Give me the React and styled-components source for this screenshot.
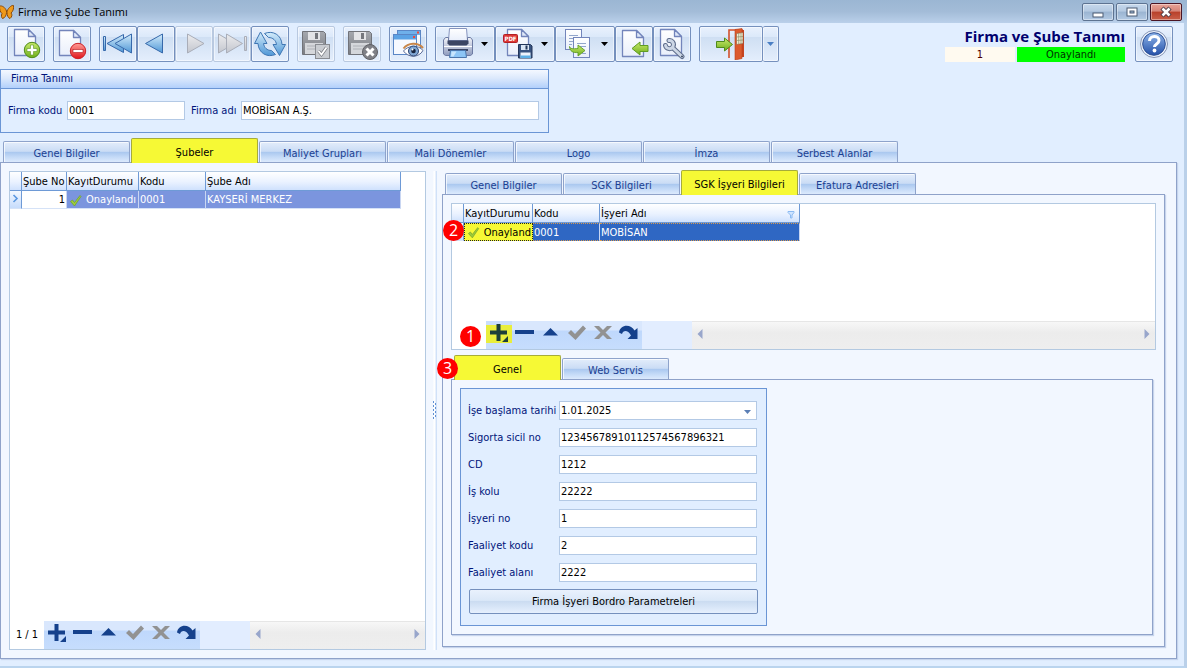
import React, { useState } from "react";
import styled, { createGlobalStyle, css } from "styled-components";

const GlobalStyle = createGlobalStyle`
  * {
    box-sizing: border-box;
  }
  body {
    margin: 0;
    background: #e1eeff;
    font-family: "DejaVu Sans Condensed", "DejaVu Sans", sans-serif;
    font-size: 11px;
    line-height: 14px;
    color: #000;
  }
  button, input {
    font: inherit;
    color: inherit;
  }
  button {
    padding: 0;
    cursor: pointer;
  }
`;

/* window frame */
const Window = styled.div`
  display: flex;
  flex-direction: column;
  min-height: 100vh;
  background: #e1eeff;
  border-right: 3px solid #bad0e9;
  border-bottom: 2px solid #bad4ee;
`;
const TitleBar = styled.header`
  display: flex;
  align-items: center;
  height: 23px;
  margin-right: -3px;
  padding-right: 5px;
  background: linear-gradient(#9bb6d3, #a3bcd8 50%, #bad0ea);
`;
const TitleText = styled.h1`
  flex: 1;
  margin: 0 0 0 4px;
  font-family: "Open Sans", "Noto Sans", sans-serif;
  font-size: 11px;
  line-height: 20px;
  font-weight: 400;
`;
const WindowButtons = styled.div`
  display: flex;
  gap: 2px;
`;
const WindowButton = styled.button`
  display: flex;
  align-items: center;
  justify-content: center;
  width: 32px;
  height: 18px;
  border: 1px solid ${(p) => (p.$close ? "#4a1524" : "#5d7391")};
  border-radius: 2px;
  background: ${(p) =>
    p.$close
      ? "linear-gradient(#e8a398, #d58477 45%, #b8402a 50%, #c9604a)"
      : "linear-gradient(#c6d8ec, #b4c9e1 45%, #9ab4d1 50%, #b3cae4)"};
  box-shadow: inset 0 0 0 1px rgba(255, 255, 255, 0.4);
`;

/* toolbar */
const Toolbar = styled.div`
  display: flex;
  align-items: flex-start;
  gap: 8px;
  padding: 3px 11px 7px 7px;
`;
const ToolGroup = styled.div`
  display: flex;
`;
const ToolButton = styled.button`
  display: flex;
  align-items: center;
  justify-content: center;
  gap: 7px;
  flex: 0 0 ${(p) => p.$width || 38}px;
  height: 36px;
  border: 1px solid ${(p) => (p.disabled ? "#b9c9e0" : "#7590bd")};
  border-left-width: ${(p) => (p.$joined ? 0 : 1)}px;
  border-radius: 2px;
  background: linear-gradient(#e9f1fd, #dce9fa 28%, #cfdff3 30%, #e4eefc);
  box-shadow: inset 0 0 0 1px rgba(255, 255, 255, 0.5);
`;
const Spacer = styled.div`
  flex: 1;
`;
const Heading = styled.div`
  display: flex;
  flex-direction: column;
  width: 180px;
  margin-right: 2px;
`;
const HeadingTitle = styled.h2`
  margin: 0;
  text-align: right;
  white-space: nowrap;
  font-family: "Open Sans", "Noto Sans", sans-serif;
  font-size: 15px;
  line-height: 21px;
  font-weight: 700;
  color: #00006e;
`;
const StatusRow = styled.div`
  display: flex;
  gap: 2px;
  text-align: center;
`;
const RecordNo = styled.span`
  flex: 0 0 70px;
  padding-top: 1px;
  background: #fffaf0;
  color: #4b0000;
`;
const StatusText = styled.span`
  flex: 1;
  padding-top: 1px;
  background: #00ff00;
  color: #003000;
`;

/* group box */
const Group = styled.section`
  width: 549px;
  max-width: 100%;
  border: 1px solid #6a95d5;
`;
const GroupTitle = styled.h3`
  margin: 0;
  padding-left: 10px;
  font-size: 11px;
  font-weight: 400;
  line-height: 18px;
  color: #00147a;
  border-bottom: 1px solid #6a95d5;
  background: linear-gradient(#f4f8ff, #dce9fc 45%, #b2d0fb);
`;
const GroupBody = styled.div`
  display: flex;
  align-items: center;
  padding: 12px 9px 12px 7px;
`;
const Label = styled.label`
  flex: 0 0 ${(p) => p.$width}px;
  white-space: nowrap;
  color: #00147a;
`;
const inputBox = css`
  height: 19px;
  min-width: 0;
  border: 1px solid #b3c9e5;
  background: #fff;
`;
const TextInput = styled.input`
  ${inputBox}
  flex: ${(p) => (p.$width ? `0 0 ${p.$width}px` : 1)};
  margin-right: ${(p) => (p.$width ? 6 : 0)}px;
  padding: 0 1px;
  outline: none;
`;
const DateBox = styled.div`
  ${inputBox}
  display: flex;
  flex: 1;
  input {
    flex: 1;
    min-width: 0;
    border: 0;
    padding: 0 1px;
    outline: none;
    background: none;
  }
  button {
    width: 18px;
    border: 0;
    background: none;
  }
`;

/* tabs */
const TabList = styled.div`
  display: flex;
  align-items: flex-end;
  gap: 1px;
  height: 24px;
  padding-left: 3px;
`;
const Tab = styled.button`
  width: ${(p) => p.$width}px;
  height: 21px;
  padding-top: 3px;
  white-space: nowrap;
  border: 1px solid #8ea3cb;
  border-bottom: 0;
  border-radius: 2px 2px 0 0;
  color: #1b3f91;
  background: linear-gradient(#e3edfb, #cadcf5 47%, #a9c7ef 50%, #c4daf7 75%, #dceafd);
  box-shadow: inset 1px 1px 0 rgba(255, 255, 255, 0.7);
  &[aria-selected="true"] {
    position: relative;
    height: 25px;
    margin-bottom: -1px;
    color: #000;
    background: #f6f935;
    border-color: #a6ac3a;
    box-shadow: none;
  }
`;
const Pane = styled.div`
  flex: 1;
  display: flex;
  min-height: 0;
  border: 1px solid #8fa2c9;
  background: #f2f7ff;
  box-shadow: 1px 1px 1px #c6d4ec;
`;
const MainTabs = styled.div`
  flex: 1;
  display: flex;
  flex-direction: column;
  margin: 5px 7px 7px 0;
`;
const SubTabs = styled.div`
  flex: 1;
  display: flex;
  flex-direction: column;
  min-width: 0;
`;
const DetailTabs = styled(SubTabs)`
  margin: 5px 3px 0 0;
`;
const LeftSide = styled.div`
  flex: 0 0 417px;
  display: flex;
  margin: 8px 7px 8px 8px;
`;
const Splitter = styled.div`
  flex: 0 0 4px;
  display: flex;
  align-items: center;
  margin: 8px 5px 8px 0;
  background: linear-gradient(to right, #f7faff, #fff 40%, #c4d9f7);
`;
const RightSide = styled.div`
  flex: 1;
  display: flex;
  min-width: 0;
  margin: 7px 11px 11px 0;
`;
const DetailBody = styled.div`
  flex: 1;
  display: flex;
  flex-direction: column;
  min-width: 0;
  padding: 8px 8px 11px;
`;

/* grids */
const Grid = styled.div`
  flex: ${(p) => (p.$height ? "none" : 1)};
  position: relative;
  display: flex;
  flex-direction: column;
  height: ${(p) => (p.$height ? `${p.$height}px` : "auto")};
  min-width: 0;
  border: 1px solid #b3c9e1;
  background: #fff;
`;
const GridBody = styled.div`
  flex: 1;
`;
const Table = styled.table`
  table-layout: fixed;
  width: ${(p) => p.$width}px;
  border-collapse: separate;
  border-spacing: 0;
`;
const Th = styled.th`
  height: 19px;
  padding: 2px 1px 0;
  text-align: left;
  font-weight: 400;
  white-space: nowrap;
  border-right: 1px solid #6e9ad6;
  border-bottom: 1px solid #6e9ad6;
  background: linear-gradient(#fff, #eaf2ff 55%, #cfe1fd);
`;
const ThContent = styled.span`
  display: flex;
  align-items: center;
  justify-content: space-between;
  padding-right: 3px;
`;
const Td = styled.td`
  height: 18px;
  padding: 1px 1px 0;
  overflow: hidden;
  white-space: nowrap;
  text-align: ${(p) => p.$align || "left"};
  border-right: 1px solid #c9d6f2;
  border-bottom: 1px solid #d5e2f7;
  ${(p) =>
    p.$tone === "soft" &&
    css`
      color: #fff;
      background: #7b95de;
    `}
  ${(p) =>
    p.$tone === "strong" &&
    css`
      color: #fff;
      background: #2f67c3;
      border-top: 1px dotted #d99a4e;
      border-bottom: 1px dotted #d99a4e;
    `}
  ${(p) =>
    p.$tone === "marked" &&
    css`
      background: #f6f935;
      border: 1px dotted #222;
    `}
  ${(p) =>
    p.$tone === "indicator" &&
    css`
      text-align: center;
      border-right-color: #6e9ad6;
      background: linear-gradient(#f4f8ff, #c6dcfc);
    `}
`;
const StatusCell = styled.span`
  display: flex;
  align-items: center;
  gap: 4px;
  padding-left: 1px;
  overflow: hidden;
`;

/* navigator under the grids */
const Navigator = styled.div`
  display: flex;
  height: 28px;
`;
const Position = styled.span`
  flex: 0 0 34px;
  text-align: center;
  line-height: 28px;
`;
const NavButtons = styled.div`
  display: flex;
  width: 206px;
  background: #e2edff;
`;
const NavButton = styled.button`
  width: 26px;
  border: 0;
  background: ${(p) =>
    p.$marked
      ? "linear-gradient(transparent 4px, #e9ee3c 4px, #e9ee3c 22px, transparent 22px), #c9defc"
      : "linear-gradient(#d9e7fd 9px, #bfd8fc 10px, #c6ddfd)"};
`;
const ScrollBar = styled.div`
  flex: 1;
  display: flex;
  justify-content: space-between;
  border-top: 1px solid #e6e6e6;
  background: linear-gradient(#f7f7f7, #ececec 40%, #eee);
`;
const ScrollButton = styled.button`
  width: 16px;
  border: 0;
  background: none;
`;

/* detail form */
const FormPanel = styled.form`
  align-self: flex-start;
  display: flex;
  flex-direction: column;
  gap: 8px;
  width: 307px;
  margin: 8px;
  padding: 12px 8px 11px 7px;
  border: 1px solid #6a95d5;
  background: #e1eeff;
`;
const FormRow = styled.div`
  display: flex;
  align-items: center;
  padding-right: 1px;
`;
const WideButton = styled.button`
  height: 25px;
  margin: -1px 0 0 1px;
  border: 1px solid #7590bd;
  border-radius: 2px;
  background: linear-gradient(#e9f1fd, #dbe8f8 45%, #cbdcf1 50%, #e6f0fe);
`;

/* red step numbers over the panels */
const Badge = styled.span`
  position: absolute;
  left: ${(p) => p.$left}px;
  top: ${(p) => p.$top}px;
  z-index: 2;
  width: 21px;
  height: 21px;
  border-radius: 50%;
  background: #f00;
  color: #fff;
  text-align: center;
  font-family: "Open Sans", "Noto Sans", sans-serif;
  font-size: 16px;
  line-height: 20px;
`;
const BadgeAnchor = styled.div`
  position: relative;
`;

/* ---- icons ---- */
const Svg = ({ w = 32, h = 32, children }) => (
  <svg width={w} height={h} viewBox={`0 0 ${w} ${h}`} aria-hidden="true">
    {children}
  </svg>
);

const Gradient = ({ id, from, to }) => (
  <linearGradient id={id} x1="0" y1="0" x2="0" y2="1">
    <stop offset="0" stopColor={from} />
    <stop offset="1" stopColor={to} />
  </linearGradient>
);

const Hidden = styled.svg`
  position: absolute;
`;
const IconDefs = () => (
  <Hidden width="0" height="0" aria-hidden="true">
    <defs>
      <Gradient id="paper" from="#ffffff" to="#e9effb" />
      <Gradient id="blue" from="#d4ecfb" to="#4f97d6" />
      <Gradient id="grey" from="#ececee" to="#c3c6ce" />
      <Gradient id="green" from="#c9ea6c" to="#6faf1b" />
      <Gradient id="red" from="#ff9d97" to="#e0161c" />
      <Gradient id="floppy" from="#a5a8ae" to="#7a7c82" />
      <Gradient id="printer" from="#f2f4fa" to="#8e9bbd" />
      <Gradient id="help" from="#8fb5ea" to="#2450a8" />
    </defs>
  </Hidden>
);

const Doc = ({ x = 4, y = 1, w = 22, h = 27 }) => (
  <g stroke="#7385bb" strokeWidth="1.3" strokeLinejoin="round">
    <path d={`M${x + 0.5} ${y + 0.5}h${w - 8}l7 7v${h - 8}h-${w - 1}z`} fill="url(#paper)" />
    <path d={`M${x + w - 7.5} ${y + 0.5}v7h7z`} fill="#dfe8f8" />
  </g>
);

const NewIcon = () => (
  <Svg>
    <Doc />
    <circle cx="22" cy="22" r="7.7" fill="url(#green)" stroke="#4f8a1b" />
    <path d="M20.500 17h3v3.500h3.500v3h-3.500v3.500h-3v-3.500h-3.500v-3h3.500z" fill="#fff" stroke="#5c9422" strokeWidth=".6" />
  </Svg>
);
const DeleteIcon = () => (
  <Svg>
    <Doc x={3} y={2} h={26} />
    <circle cx="22" cy="23" r="7.700" fill="url(#red)" stroke="#cc2128" />
    <rect x="17" y="21.500" width="10" height="3" fill="#fff" stroke="#b3151a" strokeWidth=".6" />
  </Svg>
);
const FirstIcon = () => (
  <Svg>
    <g fill="url(#blue)" stroke="#3769ab" strokeLinejoin="round">
      <rect x="1.500" y="8.500" width="2" height="14" />
      <path d="M5 15.500L21.500 6.500v18z" />
      <path d="M13 15.500L29.500 6v19z" />
    </g>
  </Svg>
);
const PrevIcon = () => (
  <Svg>
    <path d="M5.500 15.500L22.500 6v19z" fill="url(#blue)" stroke="#3769ab" strokeLinejoin="round" />
  </Svg>
);
const NextIcon = () => (
  <Svg>
    <path d="M26 15.500L9.500 6v19z" fill="url(#grey)" stroke="#a9adb8" strokeLinejoin="round" />
  </Svg>
);
const LastIcon = () => (
  <Svg>
    <g fill="url(#grey)" stroke="#a9adb8" strokeLinejoin="round">
      <path d="M18.500 15.500L2.500 6v19z" />
      <path d="M26.500 15.500L10.500 6v19z" />
      <rect x="28.500" y="8.500" width="2" height="14" />
    </g>
  </Svg>
);
const RefreshIcon = () => (
  <Svg>
    <g fill="url(#blue)" stroke="#3f76b3" strokeLinejoin="round">
      <path d="M6.500 4L13 15.500H9.500C10 19.500 13 22.500 17.500 22.500L21.500 26.500C13 30 4.500 25 4 15.500H.5z" />
      <path d="M25.500 27.500L19 16.500h3.500C22 12.500 19 9.500 14.500 9.500L10.500 5.500C19 2 27.500 7 28 16.500H31.500z" />
    </g>
  </Svg>
);
const Floppy = () => (
  <g>
    <path d="M2.500 3.500h21l2 2v21h-23z" fill="url(#floppy)" stroke="#717379" />
    <rect x="8" y="4" width="12" height="8" fill="#e3e4e7" />
    <rect x="15" y="5" width="3" height="6" fill="#75777d" />
    <rect x="5" y="15" width="18" height="11" fill="#d5d7db" />
    <path d="M7 18h13M7 21h12" stroke="#aeb1b7" />
  </g>
);
const SaveIcon = () => (
  <Svg>
    <Floppy />
    <rect x="15.500" y="16.500" width="14" height="14" fill="#c9ccd1" stroke="#898c92" />
    <path d="M18.500 23l3 3.500 5-7" fill="none" stroke="#77797f" strokeWidth="3.200" />
    <path d="M18.500 23l3 3.500 5-7" fill="none" stroke="#fff" strokeWidth="1.800" />
  </Svg>
);
const CancelSaveIcon = () => (
  <Svg>
    <Floppy />
    <circle cx="24" cy="24" r="7.500" fill="#808187" stroke="#5f6065" />
    <path d="M20.500 20.500l7 7m0-7l-7 7" stroke="#fff" strokeWidth="3" />
  </Svg>
);
const PreviewIcon = () => (
  <Svg>
    <rect x="5.500" y="2.500" width="23" height="20" fill="#f6f9ff" stroke="#5a86c5" />
    <rect x="6" y="3" width="22" height="4" fill="#6fb0ea" />
    <rect x="25" y="3.500" width="2" height="2" fill="#ef4a3c" />
    <rect x="1.500" y="6.500" width="23" height="20" fill="#f6f9ff" stroke="#5a86c5" />
    <rect x="2" y="7" width="22" height="4.500" fill="#5ba2e4" />
    <rect x="21" y="8" width="2" height="2" fill="#ef4a3c" />
    <path d="M11.500 23C15 18 26 16 31 22.500 27 30 16 30 11.500 23z" fill="#fff" stroke="#5b6c98" />
    <circle cx="21.500" cy="23" r="5" fill="#7fa6d3" stroke="#2d4574" />
    <circle cx="21.500" cy="23" r="2.300" fill="#17233d" />
    <circle cx="20.500" cy="21.500" r="1" fill="#fff" />
    <path d="M11.500 20.500C16 14.500 26 14 31 20" fill="none" stroke="#c88649" strokeWidth="2" />
  </Svg>
);
const PrintIcon = () => (
  <Svg>
    <path d="M7.500.5h17l1 12h-19z" fill="url(#paper)" stroke="#8694be" />
    <path d="M1.500 12l2-2.500h3V13h19V9.500h3l2 2.500v14l-2 1.500h-25l-2-1.500z" fill="url(#printer)" stroke="#6d7ba3" />
    <path d="M5.500 12.500h21v3l-2 2h-17l-2-2z" fill="#3b4563" />
    <path d="M2 18.500h28" stroke="#fff" />
    <rect x="6" y="21" width="20" height="2" fill="#3b4665" />
    <path d="M8.500 22.500h15l1 7h-17z" fill="#8cc5f5" stroke="#4a76ac" />
    <path d="M9.500 23.500h5l-3 5h-2.500z" fill="#c7e5fd" />
  </Svg>
);
const PdfTag = styled.text`
  font-family: "DejaVu Sans Condensed", sans-serif;
  font-size: 6px;
  font-weight: 700;
`;
const PdfIcon = () => (
  <Svg>
    <Doc x={5} y={1} w={22} h={27} />
    <rect x="1.500" y="6.500" width="14" height="8" rx="1" fill="#dc3936" stroke="#b32024" />
    <PdfTag x="8.500" y="13" textAnchor="middle" fill="#fff">PDF</PdfTag>
    <path d="M16.500 16.500h12l1.500 1.500v12H16.500z" fill="#38537f" stroke="#223559" />
    <rect x="19" y="17" width="8" height="5" fill="#dbe6f5" />
    <rect x="23.500" y="17.500" width="2" height="4" fill="#233659" />
    <rect x="18.500" y="24.500" width="10" height="5.500" fill="#eef4fc" />
    <rect x="18.500" y="27.500" width="10" height="2.500" fill="#5cb0e6" />
  </Svg>
);
const CopyIcon = () => (
  <Svg>
    <rect x="3.500" y="1.500" width="16" height="20" fill="url(#paper)" stroke="#7385bb" />
    <path d="M7 7.500h9M7 10.500h7M7 13.500h4M7 16.500h3" stroke="#92a6cb" />
    <rect x="11.500" y="9.500" width="16" height="20" fill="url(#paper)" stroke="#7385bb" />
    <path d="M15 15.500h9M16 18.500h8M20 25.500h4" stroke="#92a6cb" />
    <path d="M7.500 18.500C8 21 11 21 16 20.500V17l7 5.500-7 5.500v-3.500C11 25 8 23.500 7.500 18.500z" fill="url(#green)" stroke="#5f9c22" strokeWidth=".9" />
  </Svg>
);
const ExportIcon = () => (
  <Svg>
    <Doc y={2} h={27} />
    <path d="M14 20.500l8-6.500v3.500h8v6h-8V27z" fill="url(#green)" stroke="#5f9c22" />
  </Svg>
);
const ToolsIcon = () => (
  <Svg>
    <Doc y={1} h={27} />
    <g fill="none" strokeLinecap="round">
      <path d="M13 12.500C16 12 18.500 15.500 17 18.500 15.500 21.500 10.500 21.500 9.500 17.500M17 20l9 8.500" stroke="#5d6c8a" strokeWidth="5" />
      <path d="M13 12.500C16 12 18.500 15.500 17 18.500 15.500 21.500 10.500 21.500 9.500 17.500M17 20l9 8.500" stroke="#ccd6e5" strokeWidth="3" />
    </g>
    <circle cx="26" cy="28.500" r="1" fill="#3d4a63" />
  </Svg>
);
const ExitIcon = () => (
  <Svg>
    <path d="M14 30V2h14" fill="none" stroke="#d3502b" strokeWidth="1.600" />
    <rect x="23" y="2" width="6" height="27" fill="#c64420" />
    <path d="M20 1.500l7-1v30l-7 1.500z" fill="#dc5a2d" stroke="#b9401c" strokeWidth=".6" />
    <path d="M21.500 5.500l6.500-1v11l-6.500 1z" fill="#f3ecd2" stroke="#8f5a3c" strokeWidth=".6" />
    <path d="M23.700 5v11M26 5v11M21.500 9l6.500-.5M21.500 12.500l6.500-.5" stroke="#8d8f6a" strokeWidth=".7" />
    <path d="M1.500 13.500h8V10l8 6.500-8 6.500v-3.500h-8z" fill="url(#green)" stroke="#4f8a1b" />
  </Svg>
);
const HelpIcon = () => (
  <Svg>
    <circle cx="16" cy="16" r="13.500" fill="#eef3fb" stroke="#8695b5" />
    <circle cx="16" cy="16" r="11.300" fill="url(#help)" stroke="#2d4f94" />
    <path d="M11.500 13c0-6 9.500-6 9.500-.5 0 3.500-4.500 3.500-4.500 6.500" fill="none" stroke="#fff" strokeWidth="3" />
    <circle cx="16.500" cy="22.500" r="1.900" fill="#fff" />
  </Svg>
);
const ButterflyIcon = () => (
  <Svg w={14} h={16}>
    <path d="M7 7C9 3 12 1 13.500 1.500c.5 3-.5 6-2.500 7.500 1.500 1.500 1 4-1 5.500C8 14 7 11 7 8.500z" fill="#f09a1a" stroke="#8a4a08" />
    <path d="M6.500 7C5 3 2 1.500-.5 2c0 3 .5 6 2.500 7.500-1 2-.5 4 .5 5C5 14 6.500 11 6.500 8.500z" fill="#f09a1a" stroke="#8a4a08" />
  </Svg>
);
const CheckIcon = () => (
  <Svg w={13} h={13}>
    <path d="M1.500 7.500l2-1.500 2 2.500L11 1.500 12 2.500 5.500 12z" fill="#9ccc3c" stroke="#6f9d28" strokeWidth=".7" />
  </Svg>
);
const Caret = ({ color = "#000" }) => (
  <Svg w={7} h={4}>
    <path d="M0 0h7L3.500 4z" fill={color} />
  </Svg>
);
const ArrowTip = ({ right }) => (
  <Svg w={6} h={10}>
    <path d={right ? "M.5 0v10l5-5z" : "M5.500 0v10L.5 5z"} fill="#98a6cb" />
  </Svg>
);
const FilterIcon = () => (
  <Svg w={8} h={9}>
    <path d="M1 1.500h6v1L5 5v3H3.500V5L1 2.500z" fill="#cfe4ff" stroke="#8bbaf2" />
  </Svg>
);
const Dots = () => (
  <Svg w={4} h={20}>
    <path d="M0 1h1M0 5h1M0 9h1M0 13h1M0 17h1M2 3h1M2 7h1M2 11h1M2 15h1" stroke="#5f8fd3" strokeWidth="2" />
  </Svg>
);

const navIcons = [
  ["Ekle", <path d="M7.500 1h4v6.500H18v4h-6.500V18h-4v-6.500H1v-4h6.500zM19 13v6h-6z" />, "#15418c"],
  ["Sil", <rect x="0" y="7" width="19" height="4" />, "#15418c"],
  ["Düzenle", <path d="M2 12.500L9.500 5l7.500 7.500z" />, "#15418c"],
  ["Onayla", <path d="M1 10l3-3 4 4 8-8.500L19 5.500 8.500 17z" />, "#929292"],
  ["Vazgeç", <path d="M1 3h5l4 4 4-4h5l-6.500 6.500L19 16h-5l-4-4-4 4H1l6.500-6.500z" />, "#929292"],
  ["Yenile", <path d="M0 9.500C1 1 12 .5 15.500 7.500L18.500 5v11h-10l3.500-3.500C9 6.500 4 7 3 11z" />, "#15418c"],
];

const tools = [
  [["Yeni", NewIcon]],
  [["Sil", DeleteIcon]],
  [
    ["İlk", FirstIcon],
    ["Önceki", PrevIcon],
    ["Sonraki", NextIcon, { disabled: true }],
    ["Son", LastIcon, { disabled: true }],
    ["Yenile", RefreshIcon],
  ],
  [["Kaydet", SaveIcon, { disabled: true }]],
  [["İptal", CancelSaveIcon, { disabled: true }]],
  [["Önizleme", PreviewIcon]],
  [
    ["Yazdır", PrintIcon, { menu: true }],
    ["PDF", PdfIcon, { menu: true }],
    ["Kopyala", CopyIcon, { menu: true }],
    ["Aktar", ExportIcon],
    ["Araçlar", ToolsIcon],
  ],
];

const fields = [
  ["sicil", "Sigorta sicil no", "12345678910112574567896321"],
  ["cd", "CD", "1212"],
  ["iskolu", "İş kolu", "22222"],
  ["isyerino", "İşyeri no", "1"],
  ["faaliyetkodu", "Faaliyet kodu", "2"],
  ["faaliyetalani", "Faaliyet alanı", "2222"],
];

function Tabs({ items, initial, width }) {
  const [active, setActive] = useState(initial);
  return (
    <TabList role="tablist">
      {items.map((item) => (
        <Tab
          key={item}
          type="button"
          role="tab"
          $width={width}
          aria-selected={item === active}
          onClick={() => setActive(item)}
        >
          {item}
        </Tab>
      ))}
    </TabList>
  );
}

function GridNavigator({ position, marked }) {
  return (
    <Navigator>
      <Position>{position}</Position>
      <NavButtons>
        {navIcons.map(([name, shape, color]) => (
          <NavButton key={name} type="button" aria-label={name} $marked={marked && name === "Ekle"}>
            <Svg w={20} h={20}>
              <g fill={marked && name === "Ekle" ? "#1d3f3a" : color}>{shape}</g>
            </Svg>
          </NavButton>
        ))}
      </NavButtons>
      <ScrollBar>
        <ScrollButton type="button" aria-label="Sola kaydır"><ArrowTip /></ScrollButton>
        <ScrollButton type="button" aria-label="Sağa kaydır"><ArrowTip right /></ScrollButton>
      </ScrollBar>
    </Navigator>
  );
}

function BranchGrid() {
  return (
    <Grid>
      <GridBody>
        <Table $width={391}>
          <colgroup>
            <col width="12" />
            <col width="45" />
            <col width="72" />
            <col width="67" />
            <col width="195" />
          </colgroup>
          <thead>
            <tr>
              <Th />
              <Th>Şube No</Th>
              <Th>KayıtDurumu</Th>
              <Th>Kodu</Th>
              <Th>Şube Adı</Th>
            </tr>
          </thead>
          <tbody>
            <tr>
              <Td $tone="indicator">
                <Svg w={7} h={9}>
                  <path d="M1.500 1L5 4.500 1.500 8" fill="none" stroke="#5b97e0" strokeWidth="1.600" />
                </Svg>
              </Td>
              <Td $align="right">1</Td>
              <Td $tone="soft"><StatusCell><CheckIcon />Onaylandı</StatusCell></Td>
              <Td $tone="soft">0001</Td>
              <Td $tone="soft">KAYSERİ MERKEZ</Td>
            </tr>
          </tbody>
        </Table>
      </GridBody>
      <GridNavigator position="1 / 1" />
    </Grid>
  );
}

function WorkplaceGrid() {
  return (
    <Grid $height={147}>
      <Badge $left={-9} $top={16}>2</Badge>
      <Badge $left={8} $top={122}>1</Badge>
      <GridBody>
        <Table $width={348}>
          <colgroup>
            <col width="12" />
            <col width="69" />
            <col width="67" />
            <col width="200" />
          </colgroup>
          <thead>
            <tr>
              <Th />
              <Th>KayıtDurumu</Th>
              <Th>Kodu</Th>
              <Th><ThContent>İşyeri Adı<FilterIcon /></ThContent></Th>
            </tr>
          </thead>
          <tbody>
            <tr>
              <Td $tone="indicator" />
              <Td $tone="marked"><StatusCell><CheckIcon />Onayland</StatusCell></Td>
              <Td $tone="strong">0001</Td>
              <Td $tone="strong">MOBİSAN</Td>
            </tr>
          </tbody>
        </Table>
      </GridBody>
      <GridNavigator marked />
    </Grid>
  );
}

function WorkplaceForm() {
  return (
    <FormPanel onSubmit={(e) => e.preventDefault()}>
      <FormRow>
        <Label $width={91} htmlFor="baslama">İşe başlama tarihi</Label>
        <DateBox>
          <input id="baslama" defaultValue="1.01.2025" />
          <button type="button" aria-label="Takvim"><Caret color="#5b7fb5" /></button>
        </DateBox>
      </FormRow>
      {fields.map(([id, label, value]) => (
        <FormRow key={id}>
          <Label $width={91} htmlFor={id}>{label}</Label>
          <TextInput id={id} defaultValue={value} />
        </FormRow>
      ))}
      <WideButton type="button">Firma İşyeri Bordro Parametreleri</WideButton>
    </FormPanel>
  );
}

export default function App() {
  return (
    <Window>
      <GlobalStyle />
      <IconDefs />
      <TitleBar>
        <ButterflyIcon />
        <TitleText>Firma ve Şube Tanımı</TitleText>
        <WindowButtons>
          <WindowButton type="button" aria-label="Simge durumuna küçült">
            <Svg w={12} h={12}><rect x="1" y="7" width="10" height="4" fill="#fff" stroke="#4b5b72" /></Svg>
          </WindowButton>
          <WindowButton type="button" aria-label="Ekranı kapla">
            <Svg w={12} h={12}>
              <rect x="1" y="2" width="10" height="8" fill="#fff" stroke="#4b5b72" />
              <rect x="4" y="5" width="4" height="2" fill="#9ab4d1" stroke="#4b5b72" />
            </Svg>
          </WindowButton>
          <WindowButton type="button" aria-label="Kapat" $close>
            <Svg w={12} h={12}>
              <path d="M2 2l8 8m0-8l-8 8" stroke="#4a3a44" strokeWidth="4.500" />
              <path d="M2.500 2.500l7 7m0-7l-7 7" stroke="#fff" strokeWidth="2.600" />
            </Svg>
          </WindowButton>
        </WindowButtons>
      </TitleBar>

      <Toolbar>
        {tools.map((group, i) => (
          <ToolGroup key={i}>
            {group.map(([name, Icon, opts = {}]) => (
              <ToolButton
                key={name}
                type="button"
                aria-label={name}
                disabled={opts.disabled}
                $width={opts.menu ? 60 : 38}
              >
                <Icon />
                {opts.menu && <Caret />}
              </ToolButton>
            ))}
          </ToolGroup>
        ))}
        <ToolGroup>
          <ToolButton type="button" aria-label="Çıkış" $width={64}><ExitIcon /></ToolButton>
          <ToolButton type="button" aria-label="Çıkış seçenekleri" $width={16} $joined>
            <Caret color="#4a7fc4" />
          </ToolButton>
        </ToolGroup>
        <Spacer />
        <Heading>
          <HeadingTitle>Firma ve Şube Tanımı</HeadingTitle>
          <StatusRow>
            <RecordNo>1</RecordNo>
            <StatusText>Onaylandı</StatusText>
          </StatusRow>
        </Heading>
        <ToolButton type="button" aria-label="Yardım"><HelpIcon /></ToolButton>
      </Toolbar>

      <Group>
        <GroupTitle>Firma Tanımı</GroupTitle>
        <GroupBody>
          <Label $width={59} htmlFor="firmaKodu">Firma kodu</Label>
          <TextInput id="firmaKodu" $width={118} defaultValue="0001" />
          <Label $width={50} htmlFor="firmaAdi">Firma adı</Label>
          <TextInput id="firmaAdi" defaultValue="MOBİSAN A.Ş." />
        </GroupBody>
      </Group>

      <MainTabs>
        <Tabs
          width={127}
          initial="Şubeler"
          items={["Genel Bilgiler", "Şubeler", "Maliyet Grupları", "Mali Dönemler", "Logo", "İmza", "Serbest Alanlar"]}
        />
        <Pane>
          <LeftSide>
            <BranchGrid />
          </LeftSide>
          <Splitter><Dots /></Splitter>
          <RightSide>
            <SubTabs>
              <Tabs
                width={117}
                initial="SGK İşyeri Bilgileri"
                items={["Genel Bilgiler", "SGK Bilgileri", "SGK İşyeri Bilgileri", "Efatura Adresleri"]}
              />
              <Pane>
                <DetailBody>
                  <WorkplaceGrid />
                  <DetailTabs>
                    <BadgeAnchor>
                      <Badge $left={-14} $top={3}>3</Badge>
                      <Tabs width={107} initial="Genel" items={["Genel", "Web Servis"]} />
                    </BadgeAnchor>
                    <Pane>
                      <WorkplaceForm />
                    </Pane>
                  </DetailTabs>
                </DetailBody>
              </Pane>
            </SubTabs>
          </RightSide>
        </Pane>
      </MainTabs>
    </Window>
  );
}
